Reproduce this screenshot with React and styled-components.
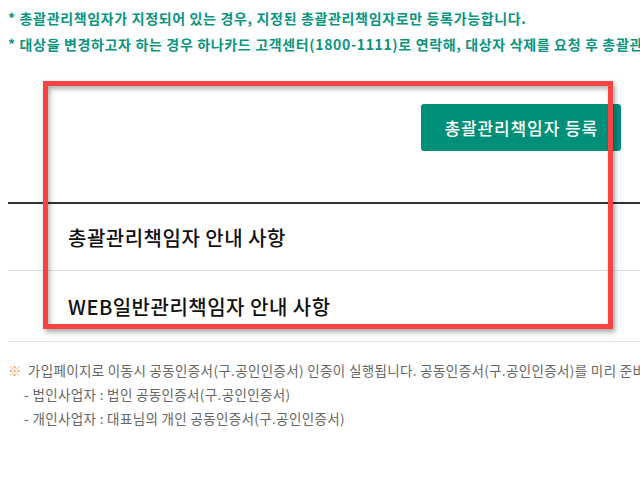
import styled, { createGlobalStyle } from "styled-components";

const GlobalStyle = createGlobalStyle`
  html, body {
    margin: 0;
    padding: 0;
    background: #fff;
  }
  body {
    font-family: "Noto Sans CJK KR", "Noto Sans", sans-serif;
    color: #111;
  }
`;

const Page = styled.div`
  position: relative;
  width: 640px;
  height: 480px;
  overflow: hidden;
  padding-left: 8px;
  box-sizing: border-box;
`;

const Notice = styled.ul`
  list-style: none;
  margin: 0;
  padding: 5px 0 0;
  white-space: nowrap;

  li {
    font-size: 14px;
    font-weight: 700;
    line-height: 26px;
    letter-spacing: 0.65px;
    color: #0a9480;
  }
`;

const Actions = styled.div`
  display: flex;
  justify-content: flex-end;
  padding: 47px 27px 51px 0;
  border-bottom: 2px solid #333;
  margin-right: -8px;
`;

const Button = styled.button`
  height: 47px;
  padding: 0 23px;
  border: 0;
  border-radius: 3px;
  background: #00907a;
  color: #fff;
  font-family: inherit;
  font-size: 17px;
  font-weight: 500;
  letter-spacing: 0.9px;
  cursor: pointer;
`;

const GuideRow = styled.div`
  display: flex;
  align-items: center;
  height: ${(p) => p.$h}px;
  padding-left: 60px;
  border-bottom: 1px solid #e2e2e2;
  margin-right: -8px;
  font-size: 20px;
  font-weight: 500;
  letter-spacing: 0.5px;
  color: #111;
`;

const Guide = styled.ul`
  list-style: none;
  margin: 16px 0 0;
  padding: 0;
  white-space: nowrap;
  font-size: 13.5px;
  letter-spacing: 0.35px;
  color: #666;

  li {
    line-height: 24px;
  }
`;

const Mark = styled.span`
  color: #eca366;
  margin-right: 6px;
`;

const Sub = styled.li`
  padding-left: 16px;
`;

const Highlight = styled.div`
  position: absolute;
  left: 43px;
  top: 81px;
  width: 570px;
  height: 248px;
  box-sizing: border-box;
  border: 5px solid #f64444;
  box-shadow: 2px 3px 5px rgba(0, 0, 0, 0.35),
    inset 2px 3px 5px rgba(0, 0, 0, 0.3);
  pointer-events: none;
`;

export default function App() {
  return (
    <>
      <GlobalStyle />
      <Page>
        <Notice>
          <li>* 총괄관리책임자가 지정되어 있는 경우, 지정된 총괄관리책임자로만 등록가능합니다.</li>
          <li>* 대상을 변경하고자 하는 경우 하나카드 고객센터(1800-1111)로 연락해, 대상자 삭제를 요청 후 총괄관리책임자를 등록해 주세요.</li>
        </Notice>
        <Actions>
          <Button>총괄관리책임자 등록</Button>
        </Actions>
        <GuideRow $h={66}>총괄관리책임자 안내 사항</GuideRow>
        <GuideRow $h={70}>WEB일반관리책임자 안내 사항</GuideRow>
        <Guide>
          <li>
            <Mark>※</Mark>가입페이지로 이동시 공동인증서(구.공인인증서) 인증이 실행됩니다. 공동인증서(구.공인인증서)를 미리 준비해 주세요.
          </li>
          <Sub>- 법인사업자 : 법인 공동인증서(구.공인인증서)</Sub>
          <Sub>- 개인사업자 : 대표님의 개인 공동인증서(구.공인인증서)</Sub>
        </Guide>
        <Highlight />
      </Page>
    </>
  );
}
